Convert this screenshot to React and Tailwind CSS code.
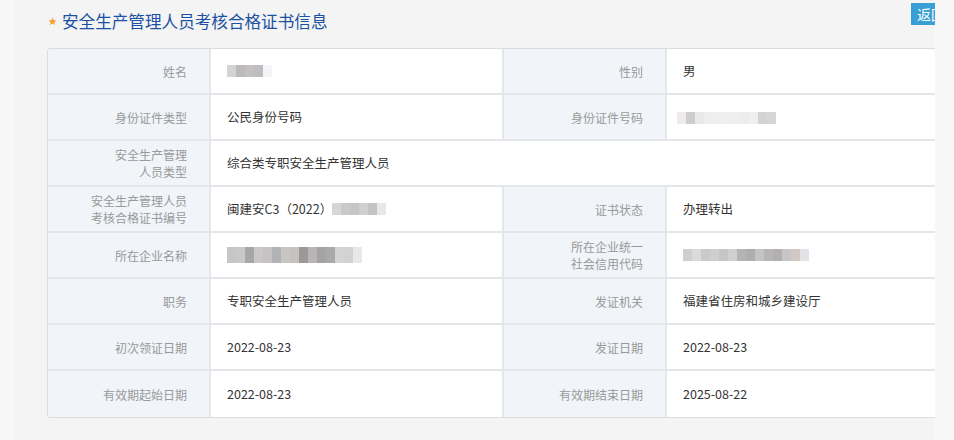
const font = { fontFamily: '"Noto Sans CJK SC", "Noto Sans", "Liberation Sans", sans-serif' };

function Blur({ shades, h = 'h-3' }) {
  return (
    <span className={`inline-flex align-middle ${h}`}>
      {shades.map((c, i) => (
        <span key={i} className="w-[9px] h-full" style={{ background: c }} />
      ))}
    </span>
  );
}

function Label({ children }) {
  return (
    <div className="flex items-center justify-end bg-[#f1f4f9] border-r-2 border-[#e4e7eb] pr-[22px] text-right text-[12px] leading-[17px] text-[#999]">
      <div>{children}</div>
    </div>
  );
}

function Value({ children, span }) {
  return (
    <div className={`flex items-center pl-[16px] text-[12.5px] text-[#333] bg-white ${span ? 'col-span-3' : 'border-r-2 border-[#e4e7eb]'}`}>
      {children}
    </div>
  );
}

function Row({ children, last }) {
  return (
    <div className={`grid grid-cols-[163px_293px_163px_291px] h-[46px] ${last ? '' : 'border-b-2 border-[#e4e6e9]'}`}>
      {children}
    </div>
  );
}

export default function App() {
  return (
    <div className="flex h-[440px] w-[954px] overflow-hidden bg-[#f7f7f7]" style={font}>
      <div className="w-[13px] shrink-0" />
      <div className="w-[922px] shrink-0 overflow-hidden bg-[#f4f4f4]">
        <div className="flex h-[48px] items-start">
          <div className="flex items-center pl-[35px] pt-[9px]">
            <svg width="9" height="9" viewBox="0 0 24 24" className="mr-[5px]">
              <path d="M12 1.5l3.1 6.9 7.4.7-5.6 5 1.7 7.4L12 17.6l-6.6 3.9 1.7-7.4-5.6-5 7.4-.7z" fill="#f5a02a" />
            </svg>
            <span className="text-[16.6px] leading-[24px] text-[#1b51a3]">安全生产管理人员考核合格证书信息</span>
          </div>
          <div className="ml-auto mr-[-18px] mt-[3px] flex h-[22px] w-[42px] items-center pl-[6px] bg-[#3a9fd5] text-[14px] text-white">
            返回
          </div>
        </div>
        <div className="ml-[34px] w-[912px] rounded-[3px] border border-[#dcdcdc] overflow-hidden">
          <Row>
            <Label>姓名</Label>
            <Value><Blur shades={['#d4d4d4', '#bdbaba', '#c2c0c1', '#bfbdbd', '#f3f5f8']} /></Value>
            <Label>性别</Label>
            <Value>男</Value>
          </Row>
          <Row>
            <Label>身份证件类型</Label>
            <Value>公民身份号码</Value>
            <Label>身份证件号码</Label>
            <Value>
              <span className="-ml-[6px]">
                <Blur shades={['#efebea', '#cdcdcd', '#e9e9e9', '#eeeeee', '#efefef', '#f0eeee', '#eeeeef', '#ececec', '#efefef', '#d4d2d2', '#d6d6d6']} />
              </span>
            </Value>
          </Row>
          <Row>
            <Label>安全生产管理<br />人员类型</Label>
            <Value span>综合类专职安全生产管理人员</Value>
          </Row>
          <Row>
            <Label>安全生产管理人员<br />考核合格证书编号</Label>
            <Value>
              <span>闽建安C3（2022）</span>
              <Blur shades={['#d6d6d6', '#c9c9c9', '#c6c6c6', '#cfcfcf', '#c3c3c3', '#e8e8e8']} />
            </Value>
            <Label>证书状态</Label>
            <Value>办理转出</Value>
          </Row>
          <Row>
            <Label>所在企业名称</Label>
            <Value>
              <Blur h="h-4" shades={['#c7c5c6', '#c9c9c9', '#a9a6a7', '#cbc7c7', '#c4c2c2', '#b2b3b7', '#c8c5c5', '#c6c2c1', '#9d9796', '#b7b5b6', '#a8a3a3', '#aaaaad', '#d4d4d6', '#d3d2d3', '#e8e8e8']} />
            </Value>
            <Label>所在企业统一<br />社会信用代码</Label>
            <Value>
              <Blur shades={['#cfcfd1', '#dcdbdb', '#ccc9c8', '#cfcfcf', '#c7c5c6', '#cfcfd2', '#b5b3b3', '#aeadaf', '#c4c4c6', '#bab5b5', '#b2afb0', '#c6c5c7', '#d2c9c4', '#e1e2e5']} />
            </Value>
          </Row>
          <Row>
            <Label>职务</Label>
            <Value>专职安全生产管理人员</Value>
            <Label>发证机关</Label>
            <Value>福建省住房和城乡建设厅</Value>
          </Row>
          <Row>
            <Label>初次领证日期</Label>
            <Value>2022-08-23</Value>
            <Label>发证日期</Label>
            <Value>2022-08-23</Value>
          </Row>
          <Row last>
            <Label>有效期起始日期</Label>
            <Value>2022-08-23</Value>
            <Label>有效期结束日期</Label>
            <Value>2025-08-22</Value>
          </Row>
        </div>
      </div>
      <div className="flex-1" />
    </div>
  );
}
